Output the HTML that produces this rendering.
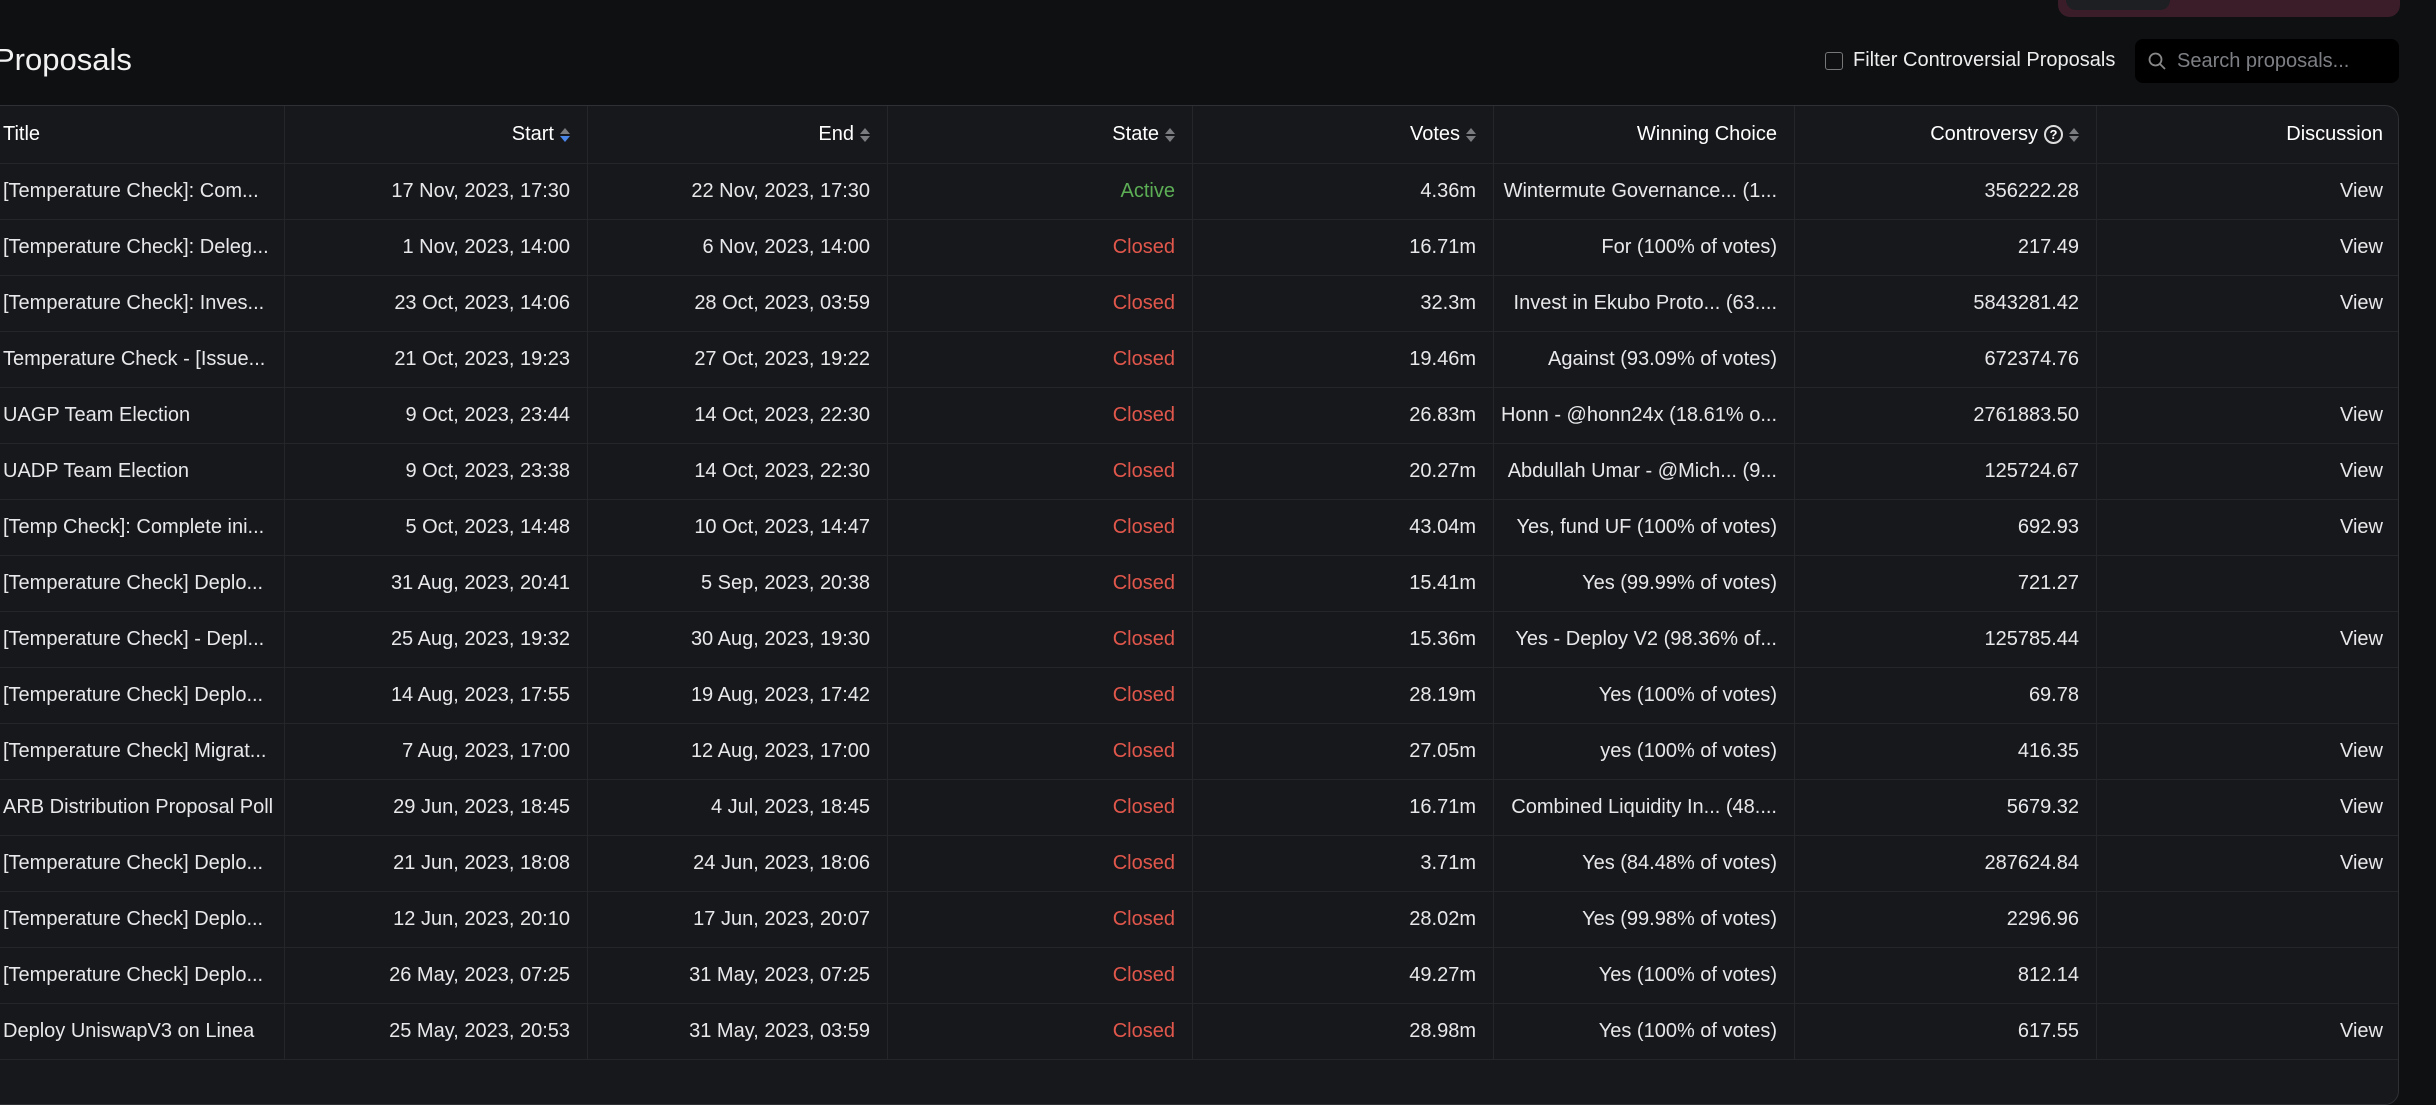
<!DOCTYPE html>
<html><head><meta charset="utf-8"><style>
*{box-sizing:border-box;margin:0;padding:0}
body{width:2436px;height:1042px;overflow:hidden;background:#0e1012;font-family:"Liberation Sans",sans-serif;color:#e8e8ea;position:relative}
.tabs{position:absolute;left:2058px;top:-20px;width:342px;height:37px;background:#3a1d28;border-radius:12px}
.tabs .act{position:absolute;left:8px;top:0;width:104px;height:30px;background:#1d1f22;border-radius:10px}
h1{position:absolute;left:-6px;top:42px;font-size:31px;font-weight:400;color:#f2f2f2}
.cb{position:absolute;left:1825px;top:52px;width:18px;height:18px;border:1.5px solid #777;border-radius:3px}
.fl{position:absolute;left:1853px;top:49px;font-size:20px;color:#eee}
.search{position:absolute;left:2135px;top:39px;width:264px;height:44px;background:#000;border-radius:8px}
.search span{position:absolute;left:42px;top:11px;font-size:20px;color:#7d7f84}
.search svg{position:absolute;left:12px;top:12px}
.table{position:absolute;left:-17px;top:105px;width:2416px;height:1000px;background:#17181c;border:1.5px solid #2e3034;border-radius:14px;overflow:hidden}
.row{display:grid;grid-template-columns:301px 303px 300px 305px 301px 301px 302px 303px;height:56px;border-bottom:1px solid #24262a}
.row.h{height:58px}
.row div{border-right:1px solid #24262a;display:flex;align-items:center;justify-content:flex-end;padding:0 17px;font-size:20px;white-space:nowrap;overflow:hidden}
.row div:first-child{justify-content:flex-start;padding-left:19px}
.row div:last-child{border-right:none}
.h div{color:#fff}
.g{color:#5cae55}.r{color:#e2574c}
.s{display:inline-block;width:10px;height:16px;margin-left:6px;position:relative}
.s:before{content:"";position:absolute;left:0;top:1px;border:5px solid transparent;border-bottom:6px solid #7a7c80;border-top:0}
.s:after{content:"";position:absolute;left:0;top:9px;border:5px solid transparent;border-top:6px solid #7a7c80;border-bottom:0}
.s.b:after{border-top-color:#4a86e8}
.q{display:inline-block;width:19px;height:19px;border:2px solid #ddd;border-radius:50%;font-size:13px;text-align:center;line-height:15px;margin-left:6px;font-weight:700}
</style></head><body>
<div class="tabs"><div class="act"></div></div>
<h1>Proposals</h1>
<div class="cb"></div><div class="fl">Filter Controversial Proposals</div>
<div class="search"><svg width="20" height="20" viewBox="0 0 20 20" fill="none" stroke="#888" stroke-width="1.8"><circle cx="8.5" cy="8.5" r="6"/><path d="M13 13l5 5"/></svg><span>Search proposals...</span></div>
<div class="table">
<div class="row h"><div>Title</div><div>Start<i class="s b"></i></div><div>End<i class="s"></i></div><div>State<i class="s"></i></div><div>Votes<i class="s"></i></div><div>Winning Choice</div><div>Controversy<span class="q">?</span><i class="s"></i></div><div>Discussion</div></div>
<div class="row"><div>[Temperature Check]: Com...</div><div>17 Nov, 2023, 17:30</div><div>22 Nov, 2023, 17:30</div><div class="g">Active</div><div>4.36m</div><div>Wintermute Governance... (1...</div><div>356222.28</div><div>View</div></div>
<div class="row"><div>[Temperature Check]: Deleg...</div><div>1 Nov, 2023, 14:00</div><div>6 Nov, 2023, 14:00</div><div class="r">Closed</div><div>16.71m</div><div>For (100% of votes)</div><div>217.49</div><div>View</div></div>
<div class="row"><div>[Temperature Check]: Inves...</div><div>23 Oct, 2023, 14:06</div><div>28 Oct, 2023, 03:59</div><div class="r">Closed</div><div>32.3m</div><div>Invest in Ekubo Proto... (63....</div><div>5843281.42</div><div>View</div></div>
<div class="row"><div>Temperature Check - [Issue...</div><div>21 Oct, 2023, 19:23</div><div>27 Oct, 2023, 19:22</div><div class="r">Closed</div><div>19.46m</div><div>Against (93.09% of votes)</div><div>672374.76</div><div></div></div>
<div class="row"><div>UAGP Team Election</div><div>9 Oct, 2023, 23:44</div><div>14 Oct, 2023, 22:30</div><div class="r">Closed</div><div>26.83m</div><div>Honn - @honn24x (18.61% o...</div><div>2761883.50</div><div>View</div></div>
<div class="row"><div>UADP Team Election</div><div>9 Oct, 2023, 23:38</div><div>14 Oct, 2023, 22:30</div><div class="r">Closed</div><div>20.27m</div><div>Abdullah Umar - @Mich... (9...</div><div>125724.67</div><div>View</div></div>
<div class="row"><div>[Temp Check]: Complete ini...</div><div>5 Oct, 2023, 14:48</div><div>10 Oct, 2023, 14:47</div><div class="r">Closed</div><div>43.04m</div><div>Yes, fund UF (100% of votes)</div><div>692.93</div><div>View</div></div>
<div class="row"><div>[Temperature Check] Deplo...</div><div>31 Aug, 2023, 20:41</div><div>5 Sep, 2023, 20:38</div><div class="r">Closed</div><div>15.41m</div><div>Yes (99.99% of votes)</div><div>721.27</div><div></div></div>
<div class="row"><div>[Temperature Check] - Depl...</div><div>25 Aug, 2023, 19:32</div><div>30 Aug, 2023, 19:30</div><div class="r">Closed</div><div>15.36m</div><div>Yes - Deploy V2 (98.36% of...</div><div>125785.44</div><div>View</div></div>
<div class="row"><div>[Temperature Check] Deplo...</div><div>14 Aug, 2023, 17:55</div><div>19 Aug, 2023, 17:42</div><div class="r">Closed</div><div>28.19m</div><div>Yes (100% of votes)</div><div>69.78</div><div></div></div>
<div class="row"><div>[Temperature Check] Migrat...</div><div>7 Aug, 2023, 17:00</div><div>12 Aug, 2023, 17:00</div><div class="r">Closed</div><div>27.05m</div><div>yes (100% of votes)</div><div>416.35</div><div>View</div></div>
<div class="row"><div>ARB Distribution Proposal Poll</div><div>29 Jun, 2023, 18:45</div><div>4 Jul, 2023, 18:45</div><div class="r">Closed</div><div>16.71m</div><div>Combined Liquidity In... (48....</div><div>5679.32</div><div>View</div></div>
<div class="row"><div>[Temperature Check] Deplo...</div><div>21 Jun, 2023, 18:08</div><div>24 Jun, 2023, 18:06</div><div class="r">Closed</div><div>3.71m</div><div>Yes (84.48% of votes)</div><div>287624.84</div><div>View</div></div>
<div class="row"><div>[Temperature Check] Deplo...</div><div>12 Jun, 2023, 20:10</div><div>17 Jun, 2023, 20:07</div><div class="r">Closed</div><div>28.02m</div><div>Yes (99.98% of votes)</div><div>2296.96</div><div></div></div>
<div class="row"><div>[Temperature Check] Deplo...</div><div>26 May, 2023, 07:25</div><div>31 May, 2023, 07:25</div><div class="r">Closed</div><div>49.27m</div><div>Yes (100% of votes)</div><div>812.14</div><div></div></div>
<div class="row"><div>Deploy UniswapV3 on Linea</div><div>25 May, 2023, 20:53</div><div>31 May, 2023, 03:59</div><div class="r">Closed</div><div>28.98m</div><div>Yes (100% of votes)</div><div>617.55</div><div>View</div></div>
</div>
</body></html>
